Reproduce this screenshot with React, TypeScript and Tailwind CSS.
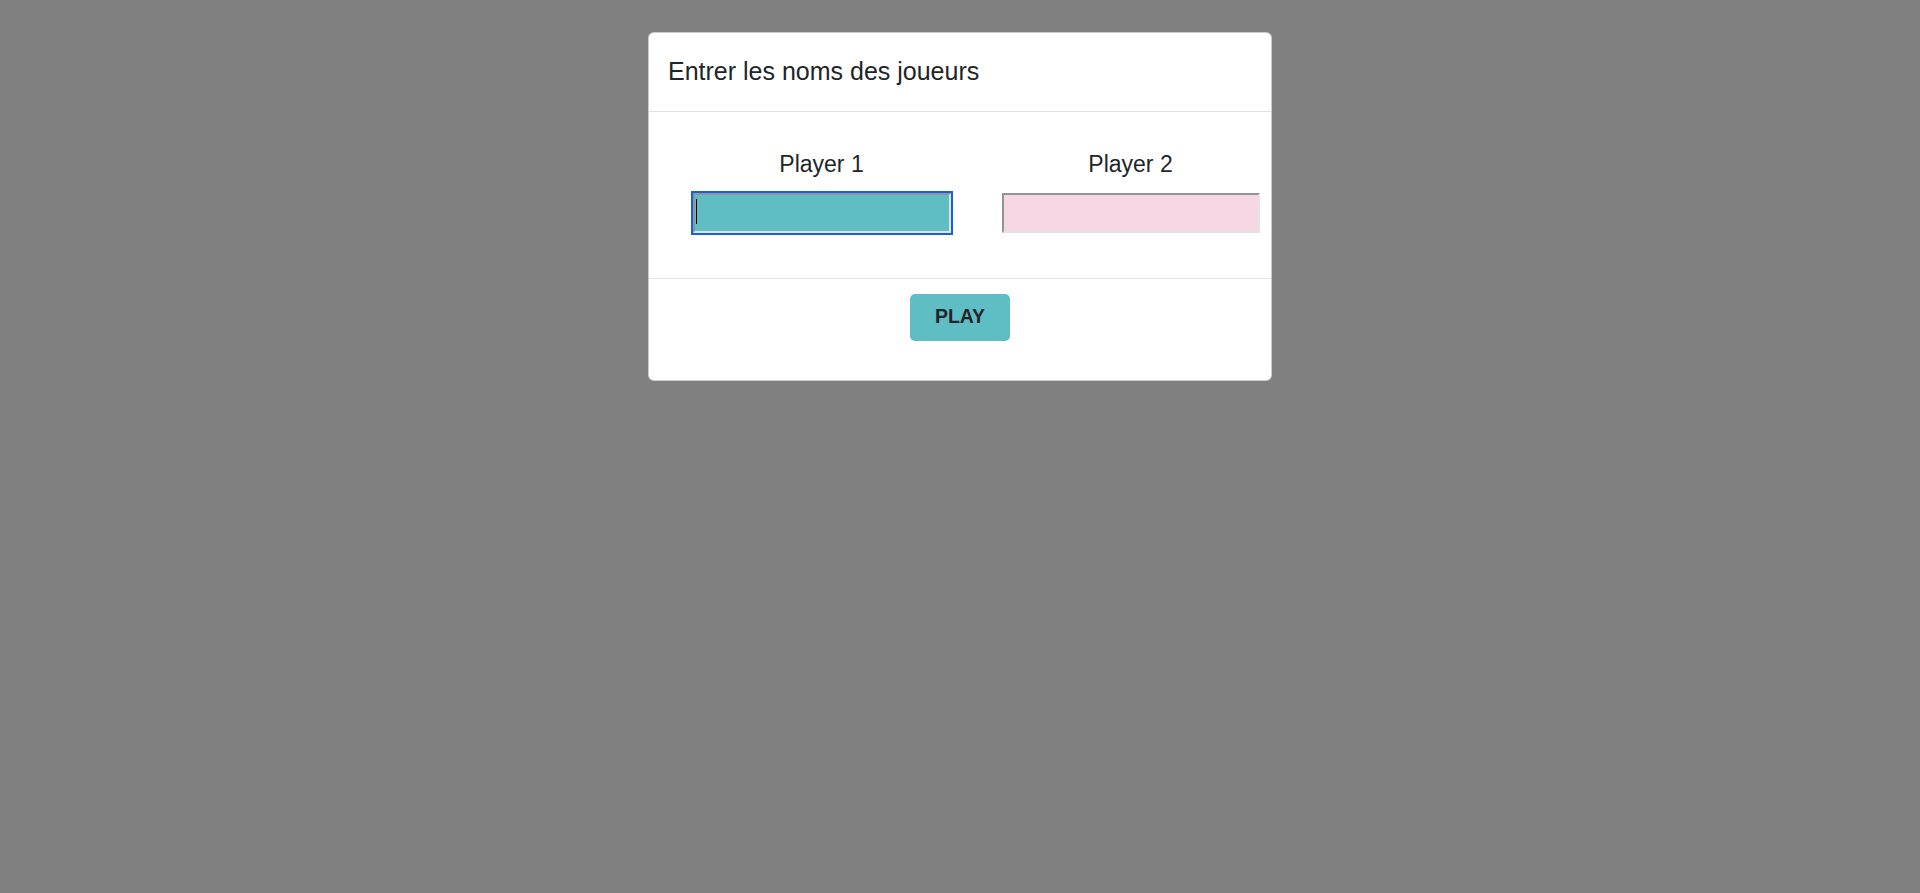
export default function App() {
  return (
    <div className="min-h-screen bg-[#808080] pt-[32px] font-['Liberation_Sans',Arial,sans-serif] text-[#212529]">
      <div className="mx-auto w-[624px] rounded-[6px] border border-black/20 bg-white">
        {/* header */}
        <div className="border-b border-[#dee2e6] py-[20px] pl-[19px] pr-5">
          <h4 className="text-[25px] leading-[37.5px]">Entrer les noms des joueurs</h4>
        </div>

        {/* body */}
        <div className="flex pb-[45px] pl-[18px] pt-[35px]">
          <div className="flex w-[309px] shrink-0 flex-col items-center">
            <label className="text-[23px] leading-[34px]">Player 1</label>
            <div className="relative mt-[12px]">
              <input
                type="text"
                className="block h-[40px] w-[258px] border-2 border-b-[#e3e3e3] border-l-[#949494] border-r-[#e3e3e3] border-t-[#949494] bg-[#5fbec4] caret-transparent outline-2 outline-offset-0 outline-[#1560e0] outline-solid"
              />
              <span className="absolute left-[3px] top-[6px] h-[25px] w-px bg-black" />
            </div>
          </div>
          <div className="flex w-[309px] shrink-0 flex-col items-center">
            <label className="text-[23px] leading-[34px]">Player 2</label>
            <input
              type="text"
              className="mt-[12px] block h-[40px] w-[258px] border-2 border-b-[#e3e3e3] border-l-[#949494] border-r-[#e3e3e3] border-t-[#949494] bg-[#f8d7e5] outline-none"
            />
          </div>
        </div>

        {/* footer */}
        <div className="flex justify-center border-t border-[#e5e5e5] pb-[39px] pt-[15px]">
          <button
            type="button"
            className="h-[47px] w-[100px] cursor-pointer rounded-[5px] bg-[#5fbec4] text-[19.5px] font-bold text-[#212529]"
          >
            PLAY
          </button>
        </div>
      </div>
    </div>
  );
}
